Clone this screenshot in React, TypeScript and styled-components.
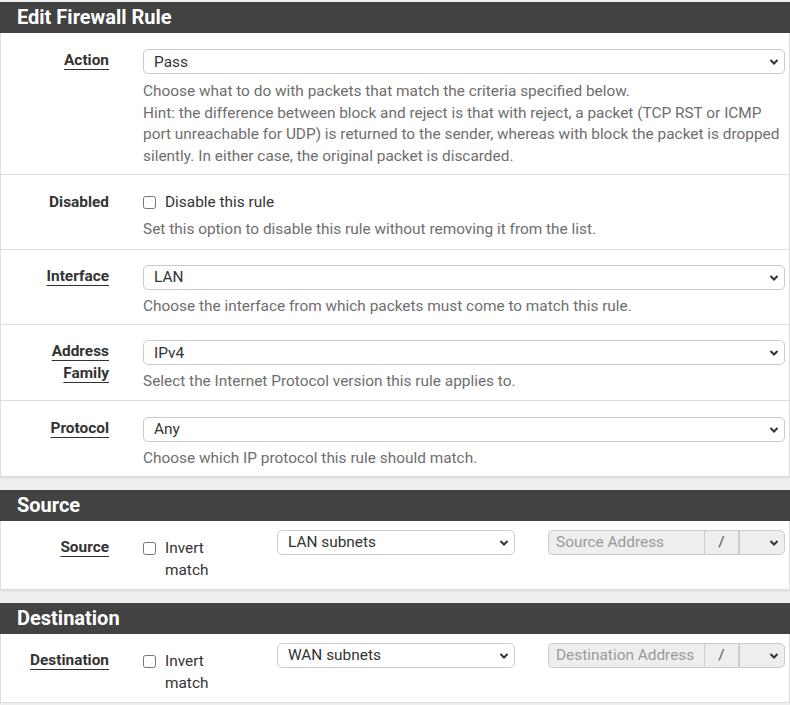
import React from "react";
import styled, { createGlobalStyle } from "styled-components";

const Global = createGlobalStyle`
  html, body { margin: 0; padding: 0; }
  body {
    background: #efefef;
    font-family: Roboto, "Liberation Sans", sans-serif;
    font-size: 15.4px;
    color: #212121;
    padding-top: 2px;
  }
`;

const Page = styled.div`
  width: 790px;
  display: flex;
  flex-direction: column;
  gap: 13px;
`;

const Panel = styled.section`
  background: #fff;
  border: 1px solid #ddd;
  border-top: none;
  width: 788px;
  box-shadow: 0 1px 2px rgba(0, 0, 0, 0.08);
`;

const Heading = styled.h2`
  margin: 0 -1px;
  height: 31px;
  background: #424242;
  color: #fff;
  font-size: 20px;
  font-weight: 700;
  line-height: 31px;
  padding-left: 17px;
`;

const Row = styled.div<{ $top: number; $bottom: number; $last?: boolean }>`
  display: flex;
  align-items: flex-start;
  padding: ${(p) => p.$top}px 4px ${(p) => p.$bottom}px 0;
  border-bottom: ${(p) => (p.$last ? "none" : "1px solid #ddd")};
`;

const Label = styled.div<{ $offset: number }>`
  width: 93px;
  padding-left: 15px;
  margin-top: ${(p) => p.$offset}px;
  flex: none;
  text-align: right;
  font-weight: 700;
  line-height: 22px;
  color: #333;
`;

const LabelText = styled.span<{ $plain?: boolean }>`
  text-decoration: ${(p) => (p.$plain ? "none" : "underline")};
  text-decoration-thickness: 1px;
  text-underline-offset: 4px;
`;

const Content = styled.div`
  flex: 1;
  margin-left: 34px;
  display: flex;
  flex-direction: column;
`;

const SelectWrap = styled.div<{ $width?: number }>`
  position: relative;
  width: ${(p) => (p.$width ? `${p.$width}px` : "100%")};
  height: 25px;
  flex: none;
`;

const Select = styled.select<{ $disabled?: boolean; $flatLeft?: boolean }>`
  appearance: none;
  -webkit-appearance: none;
  display: block;
  width: 100%;
  height: 25px;
  box-sizing: border-box;
  border: 1px solid #ccc;
  border-radius: ${(p) => (p.$flatLeft ? "0 5px 5px 0" : "5px")};
  background: ${(p) => (p.$disabled ? "#eee" : "#fff")};
  font-family: Roboto, "Liberation Sans", sans-serif;
  font-size: 15.4px;
  color: #333;
  padding: 0 10px;
  margin: 0;
  outline: none;
`;

const Chevron = styled.svg`
  position: absolute;
  right: 6px;
  top: 9px;
  width: 10px;
  height: 8px;
  pointer-events: none;
`;

const Help = styled.div<{ $gap: number }>`
  margin-top: ${(p) => p.$gap}px;
  color: #6e6e6e;
  line-height: 21.7px;
`;

const CheckLine = styled.label`
  display: flex;
  align-items: flex-start;
  gap: 9px;
  line-height: 22px;
  color: #333;
`;

const Check = styled.input`
  width: 13px;
  height: 13px;
  margin: 5px 0 0 0;
  flex: none;
`;

const InvertCol = styled.div`
  width: 100px;
  margin-left: 34px;
  flex: none;
  margin-top: 7px;
`;

const InvertLabel = styled.span`
  width: 50px;
  display: inline-block;
`;

const SubSelectCol = styled.div`
  margin-left: 34px;
  flex: none;
`;

const Group = styled.div`
  margin-left: 33px;
  display: flex;
  width: 237px;
  height: 25px;
`;

const AddrInput = styled.input`
  box-sizing: border-box;
  width: 156px;
  height: 25px;
  border: 1px solid #ccc;
  border-right: none;
  border-radius: 5px 0 0 5px;
  background: #eee;
  font-family: Roboto, "Liberation Sans", sans-serif;
  font-size: 15.4px;
  padding: 0 7px;
  margin: 0;
  color: #999;
  &::placeholder { color: #9a9a9a; }
`;

const Addon = styled.span`
  box-sizing: border-box;
  width: 35px;
  height: 25px;
  border: 1px solid #ccc;
  background: #eee;
  color: #555;
  display: flex;
  align-items: center;
  justify-content: center;
`;

const ChevronIcon = () => (
  <Chevron viewBox="0 0 10 8">
    <path d="M1.5 2 L5 5.5 L8.5 2" fill="none" stroke="#333" strokeWidth="2" />
  </Chevron>
);

const SelectField = ({ value, width, disabled, flatLeft }: { value: string; width?: number; disabled?: boolean; flatLeft?: boolean }) => (
  <SelectWrap $width={width}>
    <Select $disabled={disabled} $flatLeft={flatLeft} defaultValue={value}>
      <option value={value}>{value}</option>
    </Select>
    <ChevronIcon />
  </SelectWrap>
);

const AddressRow = ({ label, sub, placeholder }: { label: string; sub: string; placeholder: string }) => (
  <Row $top={9} $bottom={8} $last>
    <Label $offset={6}>
      <LabelText>{label}</LabelText>
    </Label>
    <InvertCol>
      <CheckLine>
        <Check type="checkbox" />
        <InvertLabel>Invert match</InvertLabel>
      </CheckLine>
    </InvertCol>
    <SubSelectCol>
      <SelectField value={sub} width={238} />
    </SubSelectCol>
    <Group>
      <AddrInput placeholder={placeholder} disabled />
      <Addon>/</Addon>
      <SelectField value="" width={46} disabled flatLeft />
    </Group>
  </Row>
);

export default function App() {
  return (
    <>
      <Global />
      <Page>
        <Panel>
          <Heading>Edit Firewall Rule</Heading>
          <Row $top={16} $bottom={6}>
            <Label $offset={0}>
              <LabelText>Action</LabelText>
            </Label>
            <Content>
              <SelectField value="Pass" />
              <Help $gap={7}>
                Choose what to do with packets that match the criteria specified below.
                <br />
                Hint: the difference between block and reject is that with reject, a packet (TCP RST or ICMP port
                unreachable for UDP) is returned to the sender, whereas with block the packet is dropped silently. In
                either case, the original packet is discarded.
              </Help>
            </Content>
          </Row>
          <Row $top={16} $bottom={8}>
            <Label $offset={0}>
              <LabelText $plain>Disabled</LabelText>
            </Label>
            <Content>
              <CheckLine>
                <Check type="checkbox" />
                <span>Disable this rule</span>
              </CheckLine>
              <Help $gap={6}>Set this option to disable this rule without removing it from the list.</Help>
            </Content>
          </Row>
          <Row $top={15} $bottom={7}>
            <Label $offset={0}>
              <LabelText>Interface</LabelText>
            </Label>
            <Content>
              <SelectField value="LAN" />
              <Help $gap={6}>Choose the interface from which packets must come to match this rule.</Help>
            </Content>
          </Row>
          <Row $top={15} $bottom={7}>
            <Label $offset={0}>
              <LabelText>Address</LabelText> <LabelText>Family</LabelText>
            </Label>
            <Content>
              <SelectField value="IPv4" />
              <Help $gap={6}>Select the Internet Protocol version this rule applies to.</Help>
            </Content>
          </Row>
          <Row $top={16} $bottom={6} $last>
            <Label $offset={0}>
              <LabelText>Protocol</LabelText>
            </Label>
            <Content>
              <SelectField value="Any" />
              <Help $gap={6}>Choose which IP protocol this rule should match.</Help>
            </Content>
          </Row>
        </Panel>
        <Panel>
          <Heading>Source</Heading>
          <AddressRow label="Source" sub="LAN subnets" placeholder="Source Address" />
        </Panel>
        <Panel>
          <Heading>Destination</Heading>
          <AddressRow label="Destination" sub="WAN subnets" placeholder="Destination Address" />
        </Panel>
      </Page>
    </>
  );
}
